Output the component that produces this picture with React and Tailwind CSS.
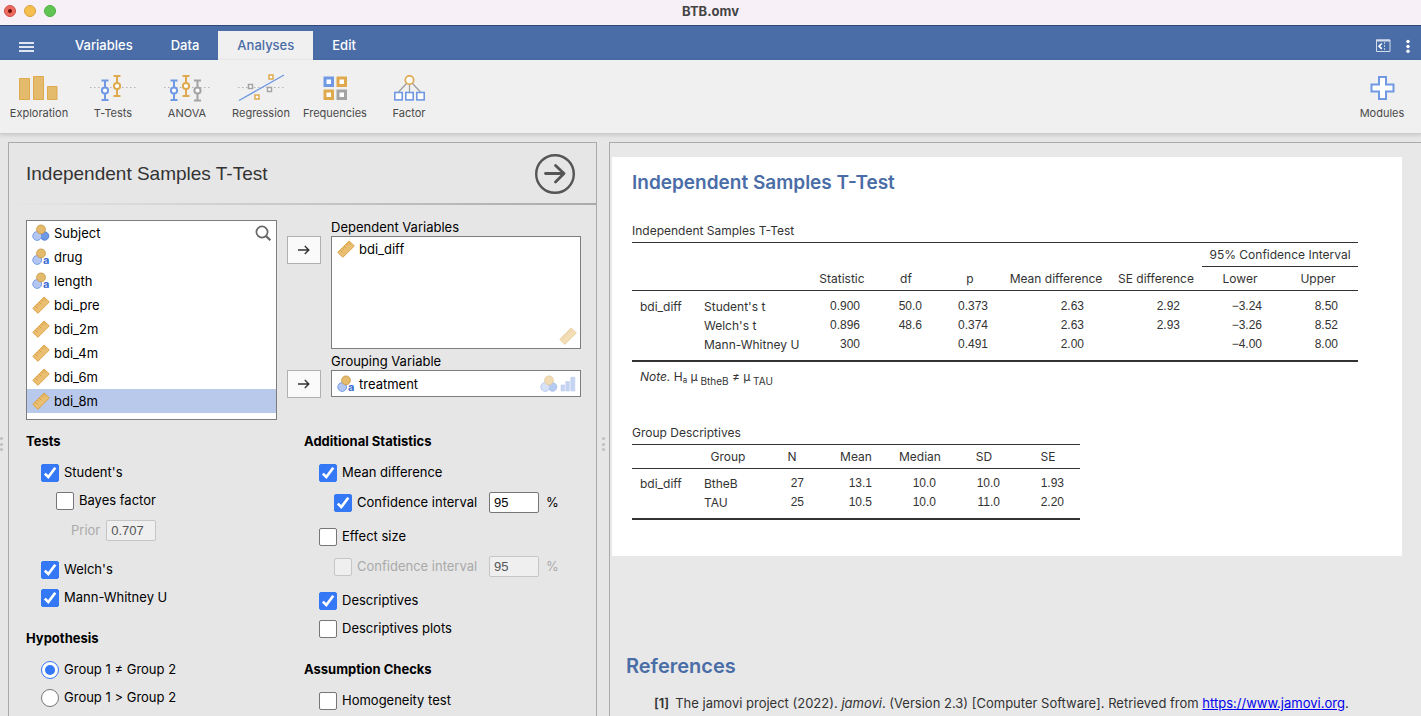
import React from "react";

const GOLD = "#dfa94e";
const BLUE = "#7199e3";
const GREY = "#a3a3a3";

/* ---------- variable type icons ---------- */

function RulerIcon({ className = "" }) {
  return (
    <svg viewBox="0 0 18 18" className={`size-[18px] shrink-0 ${className}`} aria-hidden="true">
      <path d="M0.8 12.4 12.2 0.9 17.3 6 5.9 17.3Z" fill="#eabf72" stroke="#dba246" strokeWidth="1" strokeLinejoin="round" />
      <path d="M3.4 10.2l2 2M5.4 8.2l1.4 1.4M7.4 6.2l2 2M9.4 4.2l1.4 1.4M11.2 2.4l2 2" stroke="#d0953a" strokeWidth="0.9" fill="none" />
    </svg>
  );
}

function NominalIcon({ text = false, className = "" }) {
  return (
    <svg viewBox="0 0 18 18" className={`size-[18px] shrink-0 ${className}`} aria-hidden="true">
      {!text && <circle cx="12.6" cy="12" r="4.2" fill="#6f98e4" stroke="#4a78d0" strokeWidth="0.9" />}
      <circle cx="5.2" cy="12" r="4.4" fill="#b3c7f1" stroke="#6a93e2" strokeWidth="0.9" />
      <circle cx="9" cy="5.4" r="4.4" fill="#e4bb6c" stroke="#c9984a" strokeWidth="0.9" />
      {text && (
        <text x="10.9" y="16.4" fontSize="11" fontWeight="700" fontFamily="Inter, sans-serif" fill="#3b6dd0">
          a
        </text>
      )}
    </svg>
  );
}

function OrdinalIcon({ className = "" }) {
  return (
    <svg viewBox="0 0 18 18" className={`size-[18px] shrink-0 ${className}`} aria-hidden="true">
      <path d="M2 10h3.6v6H2zM6.8 6.5h3.6V16H6.8zM11.8 2.3h4V16h-4z" fill="#8fabe8" stroke="#7c9ce2" strokeWidth="0.6" />
    </svg>
  );
}

const TypeIcon = ({ type, className }) =>
  type === "ruler" ? <RulerIcon className={className} /> : <NominalIcon text={type === "text"} className={className} />;

/* ---------- ribbon icons ---------- */

function Dots() {
  return <path d="M14 15.5H60" stroke="#b4b4b8" strokeWidth="1" strokeDasharray="1.5 2.5" />;
}

function ErrorBar({ x, top, bottom, cy, color }) {
  return (
    <g stroke={color} strokeWidth="2" fill="none">
      <path d={`M${x} ${top}V${bottom}M${x - 3.5} ${top}h7M${x - 3.5} ${bottom}h7`} />
      <circle cx={x} cy={cy} r="3.1" fill="#fff" />
    </g>
  );
}

function Box({ x, y, w, color, sw = 1.5 }) {
  return <rect x={x} y={y} width={w} height={w} fill="#fff" stroke={color} strokeWidth={sw} />;
}

const ribbonIcons = {
  Exploration: (
    <g fill="#e4bb6c" stroke={GOLD} strokeWidth="1">
      <path d="M17.5 6.5h10v21h-10zM31.5 4.5h10v23h-10zM45.5 14.5h9.5v13h-9.5z" />
    </g>
  ),
  "T-Tests": (
    <>
      <Dots />
      <ErrorBar x={29} top={8.5} bottom={28} cy={18.5} color={BLUE} />
      <ErrorBar x={41} top={4} bottom={24} cy={14} color={GOLD} />
    </>
  ),
  ANOVA: (
    <>
      <Dots />
      <ErrorBar x={24} top={8.5} bottom={28} cy={18.5} color={BLUE} />
      <ErrorBar x={36} top={4} bottom={24} cy={14} color={GOLD} />
      <ErrorBar x={47.5} top={8.5} bottom={28.5} cy={18.5} color={GREY} />
    </>
  ),
  Regression: (
    <>
      <Dots />
      <path d="M15 28.5 60 3" stroke={BLUE} strokeWidth="1.4" />
      <Box x={24.5} y={12.5} w={4} color={GREY} />
      <Box x={45} y={3} w={4} color={GOLD} />
      <Box x={43.5} y={15.5} w={4} color={GREY} />
      <Box x={31} y={23} w={4} color={GOLD} />
    </>
  ),
  Frequencies: (
    <>
      <Box x={27} y={6} w={7.5} color={BLUE} sw={3} />
      <Box x={40} y={6} w={7.5} color={GOLD} sw={3} />
      <Box x={27} y={19} w={7.5} color={GOLD} sw={3} />
      <Box x={40} y={19} w={7.5} color={GREY} sw={3} />
    </>
  ),
  Factor: (
    <>
      <path d="M35 11 26.5 20M37.5 12v8M40 11l8.5 9" stroke="#9a9a9a" strokeWidth="1.2" />
      <circle cx="37.5" cy="8" r="4.2" fill="#fff" stroke={GOLD} strokeWidth="1.7" />
      <Box x={22.8} y={20.5} w={7.4} color={BLUE} sw={1.6} />
      <Box x={33.8} y={20.5} w={7.4} color={BLUE} sw={1.6} />
      <Box x={44.8} y={20.5} w={7.4} color={BLUE} sw={1.6} />
    </>
  ),
  Modules: (
    <path
      d="M34 5h7v7.5h7.5v7H41V27h-7v-7.5h-7.5v-7H34z"
      fill="#fff"
      stroke={BLUE}
      strokeWidth="2"
    />
  ),
};

function RibbonButton({ name }) {
  return (
    <button type="button" className="flex w-[74px] flex-col items-center pt-3">
      <svg viewBox="0 0 74 30" className="h-[30px] w-[74px]" fill="none" aria-hidden="true">
        {ribbonIcons[name]}
      </svg>
      <span className="mt-[3px] text-[11px] leading-4 text-[#4a4a4a]">{name}</span>
    </button>
  );
}

/* ---------- header ---------- */

function TitleBar() {
  return (
    <header className="grid h-[26px] shrink-0 grid-cols-[1fr_auto_1fr] border-b border-[#2f4a78] bg-[#f7f0f7] pt-[5px]">
      <div className="flex gap-2 pl-1">
        <span className="grid size-3 place-items-center rounded-full border border-[#d0504a] bg-[#ed6a5f]">
          <span className="size-1 rounded-full bg-[#6b0f0a]" />
        </span>
        <span className="size-3 rounded-full border border-[#dba13c] bg-[#f5bf4f]" />
        <span className="size-3 rounded-full border border-[#4faf41] bg-[#61c554]" />
      </div>
      <h1 className="text-[13px] leading-3 font-bold text-[#444]">BTB.omv</h1>
    </header>
  );
}

function TabBar() {
  const tabs = ["Variables", "Data", "Analyses", "Edit"];
  return (
    <nav className="flex h-[34px] shrink-0 items-end bg-[#4a6da7]">
      <button type="button" aria-label="Menu" className="flex w-14 flex-col gap-[2px] pb-2 pl-[19px]">
        <span className="h-[2px] w-[15px] bg-[#dfe6f1]" />
        <span className="h-[2px] w-[15px] bg-[#dfe6f1]" />
        <span className="h-[2px] w-[15px] bg-[#dfe6f1]" />
      </button>
      {tabs.map((t) => (
        <button
          key={t}
          type="button"
          className={`h-[29px] px-[19px] text-[13px] font-medium ${
            t === "Analyses" ? "bg-[#f0f0f0] text-[#4a6da7]" : "text-white"
          }`}
        >
          {t}
        </button>
      ))}
      <div className="ml-auto flex h-[29px] items-center gap-3 pr-2">
        <button type="button" aria-label="Toggle results pane">
          <svg viewBox="0 0 16 14" className="h-[14px] w-4" fill="none" aria-hidden="true">
            <path d="M1.5 1h13.5v11.5H1.5z" stroke="#d3dcec" strokeWidth="1" />
            <path d="M1 1.5h14" stroke="#d3dcec" strokeWidth="2" />
            <path d="M6.8 4.5 4 7.2l2.8 2.7" stroke="#fff" strokeWidth="1.6" />
            <path d="M9.5 3v9" stroke="#b9c7e0" strokeWidth="1" strokeDasharray="2 1" />
          </svg>
        </button>
        <button type="button" aria-label="More options">
          <svg viewBox="0 0 10 14" className="h-[14px] w-[10px]" fill="#fff" aria-hidden="true">
            <circle cx="5" cy="2.5" r="1.7" />
            <circle cx="5" cy="7.5" r="1.7" />
            <circle cx="5" cy="12.3" r="1.7" />
          </svg>
        </button>
      </div>
    </nav>
  );
}

function Ribbon() {
  const items = ["Exploration", "T-Tests", "ANOVA", "Regression", "Frequencies", "Factor"];
  return (
    <div className="z-10 flex h-[74px] shrink-0 border-b border-[#cccccc] bg-[#f0f0f0] px-[2px] shadow-[0_1px_4px_rgba(0,0,0,0.15)]">
      {items.map((n) => (
        <RibbonButton key={n} name={n} />
      ))}
      <div className="ml-auto">
        <RibbonButton name="Modules" />
      </div>
    </div>
  );
}

/* ---------- option controls ---------- */

function Check({ label, checked = false, disabled = false, className = "" }) {
  return (
    <label className={`flex h-7 items-center gap-[5px] ${disabled ? "text-[#aaaaaa]" : ""} ${className}`}>
      <span className="grid size-[18px] place-items-center">
        <input
          type="checkbox"
          defaultChecked={checked}
          disabled={disabled}
          className="peer col-start-1 row-start-1 size-[18px] appearance-none rounded-[2px] border border-[#767676] bg-white checked:border-[#3478f6] checked:bg-[#3478f6] disabled:border-[#c6c6c6] disabled:bg-[#efefef]"
        />
        <svg
          viewBox="0 0 18 18"
          className="pointer-events-none invisible col-start-1 row-start-1 size-[18px] peer-checked:visible"
          fill="none"
          aria-hidden="true"
        >
          <path d="M3.8 9.6 7.3 13 14.3 3.8" stroke="#fff" strokeWidth="2.7" />
        </svg>
      </span>
      {label}
    </label>
  );
}

function Radio({ label, checked = false }) {
  return (
    <label className="flex h-7 items-center gap-[5px]">
      <span className="grid size-[18px] place-items-center">
        <input
          type="radio"
          name="hypothesis"
          defaultChecked={checked}
          className="peer col-start-1 row-start-1 size-[18px] appearance-none rounded-full border border-[#767676] bg-white checked:border-[#3478f6]"
        />
        <span className="pointer-events-none invisible col-start-1 row-start-1 size-[10px] rounded-full bg-[#3478f6] peer-checked:visible" />
      </span>
      {label}
    </label>
  );
}

function NumberBox({ value, label, disabled = false }) {
  return (
    <input
      type="text"
      aria-label={label}
      defaultValue={value}
      disabled={disabled}
      className="mb-px h-[21px] w-[50px] rounded-[2px] border border-[#767676] bg-white px-1 font-['Liberation_Sans',sans-serif] text-[13px] text-black disabled:border-[#c6c6c6] disabled:bg-[#efefef] disabled:text-[#555]"
    />
  );
}

function IntervalRow({ checked = false, disabled = false }) {
  return (
    <div className={`flex h-8 items-center pl-[30px] ${disabled ? "text-[#aaaaaa]" : ""}`}>
      <Check label="Confidence interval" checked={checked} disabled={disabled} className="w-[155px]" />
      <NumberBox value="95" label="Confidence level" disabled={disabled} />
      <span className="pl-[7px]">%</span>
    </div>
  );
}

const GroupTitle = ({ children, className = "" }) => (
  <h3 className={`mb-[9px] leading-[18px] font-bold ${className}`}>{children}</h3>
);

/* ---------- options panel ---------- */

const variables = [
  ["Subject", "nominal"],
  ["drug", "text"],
  ["length", "text"],
  ["bdi_pre", "ruler"],
  ["bdi_2m", "ruler"],
  ["bdi_4m", "ruler"],
  ["bdi_6m", "ruler"],
  ["bdi_8m", "ruler"],
];

function Variable({ name, type, selected = false }) {
  return (
    <li className={`flex h-6 items-center gap-1 pt-[2px] pl-[5px] ${selected ? "bg-[#b9c9ec]" : ""}`}>
      <TypeIcon type={type} className="mb-[2px]" />
      {name}
    </li>
  );
}

function AssignButton({ label }) {
  return (
    <button
      type="button"
      aria-label={label}
      className="grid h-7 w-[34px] place-items-center border border-[#b0b0b0] bg-[#fafafa]"
    >
      <svg viewBox="0 0 14 12" className="h-3 w-[14px]" fill="none" stroke="#333" strokeWidth="1.4" aria-hidden="true">
        <path d="M1 6h11M7.8 2 11.8 6 7.8 10" />
      </svg>
    </button>
  );
}

function OptionsPanel() {
  return (
    <section className="w-[589px] shrink-0 border border-b-0 border-[#aaaaaa] bg-[#e6e6e6] text-[13px] text-black">
      <div className="flex h-[60px] items-center justify-between pt-[2px] pr-[21px] pl-[17px]">
        <h2 className="font-['Liberation_Sans',sans-serif] text-[19px] text-[#333]">Independent Samples T-Test</h2>
        <button type="button" aria-label="Close options">
          <svg viewBox="0 0 40 40" className="size-10" fill="none" stroke="#555" aria-hidden="true">
            <circle cx="20" cy="20" r="18.8" strokeWidth="2.4" />
            <path d="M10.5 19.5H29M20.5 11.5 29 19.5 20.5 28" strokeWidth="2.8" strokeLinejoin="round" strokeLinecap="round" />
          </svg>
        </button>
      </div>
      <div className="h-[2px] bg-linear-to-r from-[#e6e6e6] to-[#aaaaaa]" />

      <div className="flex pt-[15px] pl-[17px]">
        <div className="relative h-[200px] w-[251px] border border-[#7d7d7d] bg-white">
          <ul>
            {variables.map(([n, t]) => (
              <Variable key={n} name={n} type={t} selected={n === "bdi_8m"} />
            ))}
          </ul>
          <button type="button" aria-label="Search variables" className="absolute top-1 right-1">
            <svg viewBox="0 0 18 18" className="size-[18px]" fill="none" stroke="#666" aria-hidden="true">
              <circle cx="8" cy="7" r="5.6" strokeWidth="1.7" />
              <path d="M12 11l4.3 4.3" strokeWidth="2.2" />
            </svg>
          </button>
        </div>

        <div className="grid grid-cols-[34px_250px] content-start gap-x-[10px] pl-[10px]">
          <span className="col-start-2 h-4 leading-[14px]">Dependent Variables</span>
          <AssignButton label="Assign dependent variable" />
          <div className="flex h-[113px] flex-col justify-between border border-[#7d7d7d] bg-white pb-[3px]">
            <ul>
              <Variable name="bdi_diff" type="ruler" />
            </ul>
            <RulerIcon className="mr-[3px] self-end opacity-50" />
          </div>
          <span className="col-start-2 h-[21px] pt-[3px] leading-[18px]">Grouping Variable</span>
          <AssignButton label="Assign grouping variable" />
          <div className="flex h-[27px] items-center justify-between border border-[#7d7d7d] bg-white pr-[3px]">
            <ul>
              <Variable name="treatment" type="text" />
            </ul>
            <div className="flex gap-[1px] opacity-50">
              <NominalIcon />
              <OrdinalIcon />
            </div>
          </div>
        </div>
      </div>

      <div className="grid grid-cols-[278px_1fr] pt-3 pl-[17px]">
        <div>
          <GroupTitle>Tests</GroupTitle>
          <div className="pl-[15px]">
            <Check label="Student's" checked />
            <Check label="Bayes factor" className="pl-[15px]" />
            <label className="mb-[9px] flex h-8 items-center gap-[6px] pl-[30px] text-[#aaaaaa]">
              Prior
              <NumberBox value="0.707" label="Prior" disabled />
            </label>
            <Check label="Welch's" checked />
            <Check label="Mann-Whitney U" checked />
          </div>
          <GroupTitle className="mt-[17px]">Hypothesis</GroupTitle>
          <div className="pl-[15px]">
            <Radio label="Group 1 ≠ Group 2" checked />
            <Radio label="Group 1 > Group 2" />
          </div>
        </div>
        <div>
          <GroupTitle>Additional Statistics</GroupTitle>
          <Check label="Mean difference" checked className="pl-[15px]" />
          <IntervalRow checked />
          <Check label="Effect size" className="mt-1 pl-[15px]" />
          <IntervalRow disabled />
          <Check label="Descriptives" checked className="mt-1 pl-[15px]" />
          <Check label="Descriptives plots" className="pl-[15px]" />
          <GroupTitle className="mt-[17px]">Assumption Checks</GroupTitle>
          <Check label="Homogeneity test" className="pl-[15px]" />
        </div>
      </div>
    </section>
  );
}

/* ---------- results ---------- */

const Num = ({ children, className = "pr-4" }) => (
  <td className={`text-right align-top font-['Liberation_Sans',sans-serif] ${className}`}>{children}</td>
);

const testRows = [
  ["bdi_diff", "Student's t", "0.900", "50.0", "0.373", "2.63", "2.92", "−3.24", "8.50"],
  ["", "Welch's t", "0.896", "48.6", "0.374", "2.63", "2.93", "−3.26", "8.52"],
  ["", "Mann-Whitney U", "300", "", "0.491", "2.00", "", "−4.00", "8.00"],
];
const testPads = ["pr-[14px]", "pr-4", "pr-[14px]", "pr-[26px]", "pr-[22px]", "pr-4", "pr-5"];

const groupRows = [
  ["bdi_diff", "BtheB", "27", "13.1", "10.0", "10.0", "1.93"],
  ["", "TAU", "25", "10.5", "10.0", "11.0", "2.20"],
];
const groupPads = ["pr-5", "pr-4", "pr-4", "pr-4", "pr-4"];

function Rows({ rows, pads }) {
  return (
    <tbody className="border-b-2 border-[#333]">
      <tr className="h-[6px]">
        <td />
      </tr>
      {rows.map((r) => (
        <tr key={r[1]} className="h-[19px]">
          <td className="pl-2">{r[0]}</td>
          <td className="pl-2 whitespace-nowrap">{r[1]}</td>
          {r.slice(2).map((v, i) => (
            <Num key={i} className={pads[i]}>
              {v}
            </Num>
          ))}
        </tr>
      ))}
      <tr className="h-[7px]">
        <td />
      </tr>
    </tbody>
  );
}

function TestTable() {
  return (
    <table className="w-[726px] table-fixed border-collapse leading-[19px]">
      <caption className="pb-[2px] text-left">Independent Samples T-Test</caption>
      <colgroup>
        <col className="w-[64px]" />
        <col className="w-[114px]" />
        <col className="w-[64px]" />
        <col className="w-[64px]" />
        <col className="w-[64px]" />
        <col className="w-[108px]" />
        <col className="w-[92px]" />
        <col className="w-[76px]" />
        <col className="w-[80px]" />
      </colgroup>
      <thead className="border-y border-[#333] whitespace-nowrap [&_th]:font-normal">
        <tr className="h-6">
          <th colSpan={7} />
          <th colSpan={2} className="border-b border-[#333]">95% Confidence Interval</th>
        </tr>
        <tr className="h-6">
          <th />
          <th />
          <th>Statistic</th>
          <th>df</th>
          <th>p</th>
          <th>Mean difference</th>
          <th>SE difference</th>
          <th>Lower</th>
          <th>Upper</th>
        </tr>
      </thead>
      <Rows rows={testRows} pads={testPads} />
    </table>
  );
}

function GroupTable() {
  return (
    <table className="w-[448px] table-fixed border-collapse leading-[19px]">
      <caption className="pb-[2px] text-left">Group Descriptives</caption>
      <thead className="border-y border-[#333] [&_th]:font-normal">
        <tr className="h-6">
          <th />
          <th>Group</th>
          <th>N</th>
          <th>Mean</th>
          <th>Median</th>
          <th>SD</th>
          <th>SE</th>
        </tr>
      </thead>
      <Rows rows={groupRows} pads={groupPads} />
    </table>
  );
}

function Results() {
  return (
    <section className="min-w-0 flex-1 border-t border-l border-[#aaaaaa] bg-[#e8e8e8] pt-[14px] pr-[19px] pl-[2px] text-[12px] text-[#333]">
      <div className="bg-white px-5 pt-3 pb-9">
        <h2 className="text-[19px] leading-7 font-semibold text-[#4a6da7]">Independent Samples T-Test</h2>
        <div className="h-6" />
        <TestTable />
        <p className="mt-[5px] pl-2 leading-5">
          <em>Note.</em> H<sub className="text-[8px]">a</sub> µ
          <sub className="align-[-2px] text-[10px]"> BtheB</sub> ≠ µ
          <sub className="align-[-2px] text-[10px]"> TAU</sub>
        </p>
        <div className="h-9" />
        <GroupTable />
      </div>
      <div className="pt-24 pl-[14px]">
        <h2 className="text-[20px] leading-7 font-semibold text-[#4a6da7]">References</h2>
        <p className="mt-[13px] flex gap-[6px] pl-7 text-[13px] leading-5">
          <b className="font-semibold">[1]</b>
          <span>
            The jamovi project (2022). <em>jamovi</em>. (Version 2.3) [Computer Software]. Retrieved from{" "}
            <a href="https://www.jamovi.org" className="text-[#0000ee] underline">https://www.jamovi.org</a>.
          </span>
        </p>
      </div>
    </section>
  );
}

function Grip() {
  return (
    <div className="mt-[295px] flex h-[14px] flex-col justify-between">
      <span className="size-[3px] rounded-full bg-[#bdbdbd]" />
      <span className="size-[3px] rounded-full bg-[#bdbdbd]" />
      <span className="size-[3px] rounded-full bg-[#bdbdbd]" />
    </div>
  );
}

export default function App() {
  return (
    <div className="flex h-screen flex-col overflow-hidden bg-[#e6e6e6] font-[Inter,sans-serif]">
      <TitleBar />
      <TabBar />
      <Ribbon />
      <main className="flex min-h-0 flex-1 pt-2">
        <div className="w-2 shrink-0">
          <Grip />
        </div>
        <OptionsPanel />
        <div className="flex w-3 shrink-0 justify-center">
          <Grip />
        </div>
        <Results />
      </main>
    </div>
  );
}
